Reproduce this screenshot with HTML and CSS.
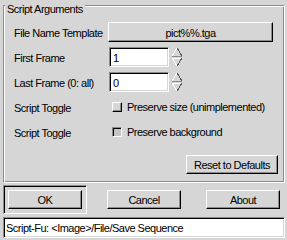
FILE: index.html
```html
<!DOCTYPE html>
<html lang="en">
<head>
  <meta charset="UTF-8">
  <title>Script-Fu: Save Sequence</title>
<link rel="stylesheet" href="styles.css">
</head>
<body>
  <div class="frame">
    <div class="frame-title">Script Arguments</div>
    <div class="args">
      <div class="row">
        <span class="label">File Name Template</span>
        <button class="btn file-btn">pict%%.tga</button>
      </div>
      <div class="row">
        <span class="label">First Frame</span>
        <input class="entry" type="text" value="1" readonly>
        <svg class="spin" width="12" height="20" viewBox="0 0 12 20">
          <path d="M1 9 L6 1" stroke="#fff"/>
          <path d="M6 1 L11 9" stroke="#555"/>
          <path d="M1 9.5 H11" stroke="#8c8c8c"/>
          <path d="M1 11.5 H11" stroke="#fff"/>
          <path d="M1 11 L6 19" stroke="#fff"/>
          <path d="M11 11 L6 19" stroke="#555"/>
        </svg>
      </div>
      <div class="row">
        <span class="label">Last Frame (0: all)</span>
        <input class="entry" type="text" value="0" readonly>
        <svg class="spin" width="12" height="20" viewBox="0 0 12 20">
          <path d="M1 9 L6 1" stroke="#fff"/>
          <path d="M6 1 L11 9" stroke="#555"/>
          <path d="M1 9.5 H11" stroke="#8c8c8c"/>
          <path d="M1 11.5 H11" stroke="#fff"/>
          <path d="M1 11 L6 19" stroke="#fff"/>
          <path d="M11 11 L6 19" stroke="#555"/>
        </svg>
      </div>
      <div class="row">
        <span class="label">Script Toggle</span>
        <label class="toggle"><input class="check" type="checkbox">Preserve size (unimplemented)</label>
      </div>
      <div class="row">
        <span class="label">Script Toggle</span>
        <label class="toggle"><input class="check" type="checkbox" checked>Preserve background</label>
      </div>
    </div>
    <div class="reset-row">
      <button class="btn reset-btn">Reset to Defaults</button>
    </div>
  </div>

  <div class="actions">
    <div class="default-box"><button class="btn">OK</button></div>
    <button class="btn cancel">Cancel</button>
    <button class="btn about">About</button>
  </div>

  <div class="status">Script-Fu: &lt;Image&gt;/File/Save Sequence</div>
</body>
</html>
```

FILE: styles.css
```css
body {
  margin: 0;
  width: 287px;
  height: 240px;
  overflow: hidden;
  background: #d6d6d6;
  color: #000;
  font: 11px "Liberation Sans", Arial, sans-serif;
  letter-spacing: -0.5px;
}

/* etched frame round the arguments */
.frame {
  margin: 5px 2px 0 3px;
  padding: 0 0 8px;
  border: 1px solid;
  border-color: #8c8c8c #fff #fff #8c8c8c;
  box-shadow: inset 1px 1px 0 #fff, inset -1px -1px 0 #8c8c8c;
}

.frame-title {
  width: fit-content;
  margin: -3px 0 0 1px;
  padding: 0 2px;
  line-height: 13px;
  background: #d6d6d6;
}

.args {
  margin-top: 6px;
  display: flex;
  flex-direction: column;
  gap: 5px;
}

.row {
  display: flex;
  align-items: center;
  height: 20px;
}

.label {
  width: 104px;
  padding: 2px 0 0 10px;
  box-sizing: border-box;
  white-space: nowrap;
}

/* raised gtk style button */
.btn {
  margin: 0;
  padding: 1px 0 0;
  height: 19px;
  box-sizing: border-box;
  font: inherit;
  letter-spacing: inherit;
  line-height: 16px;
  white-space: nowrap;
  color: #000;
  background: #d6d6d6;
  border: 1px solid;
  border-color: #fff #000 #000 #fff;
  box-shadow: inset -1px -1px 0 #8c8c8c;
}

.file-btn {
  width: 165px;
  height: 20px;
}

.entry {
  width: 60px;
  height: 20px;
  margin: 0 0 0 1px;
  padding: 1px 0 0 3px;
  box-sizing: border-box;
  font: inherit;
  letter-spacing: inherit;
  color: #000;
  background: #fff;
  outline: none;
  border: 1px solid;
  border-color: #8c8c8c #fff #fff #8c8c8c;
  box-shadow: inset 1px 1px 0 #000, inset -1px -1px 0 #d6d6d6;
}

.spin {
  margin-left: 2px;
  shape-rendering: crispEdges;
  fill: none;
}

.toggle {
  display: flex;
  align-items: center;
  gap: 5px;
  margin-left: 4px;
  white-space: nowrap;
}

.check {
  appearance: none;
  margin: 0;
  width: 10px;
  height: 10px;
  box-sizing: border-box;
  background: #d6d6d6;
  border: 1px solid;
  border-color: #fff #000 #000 #fff;
  box-shadow: inset -1px -1px 0 #8c8c8c;
}

.check:checked {
  background: #c4c4c4;
  border-color: #8c8c8c #fff #fff #8c8c8c;
  box-shadow: inset 1px 1px 0 #000;
}

.toggle span {
  padding-top: 2px;
}

.reset-row {
  display: flex;
  justify-content: flex-end;
  margin-top: 13px;
  padding-right: 6px;
}

.reset-btn {
  width: 92px;
}

/* dialog buttons */
.actions {
  display: flex;
  align-items: center;
  height: 29px;
  margin: 2px 0 0 3px;
}

.actions .btn {
  width: 74px;
}

.default-box {
  width: 84px;
  height: 29px;
  box-sizing: border-box;
  display: flex;
  align-items: center;
  justify-content: center;
  border: 1px solid;
  border-color: #8c8c8c #fff #fff #8c8c8c;
  box-shadow: inset 1px 1px 0 #000;
}

.cancel {
  margin-left: 20px;
}

.about {
  margin-left: 25px;
}

.status {
  margin: 3px 2px 0 3px;
  height: 21px;
  padding: 1px 0 0 2px;
  box-sizing: border-box;
  line-height: 18px;
  white-space: nowrap;
  background: #fff;
  border: 1px solid;
  border-color: #8c8c8c #fff #fff #8c8c8c;
  box-shadow: inset 1px 1px 0 #000, inset -1px -1px 0 #d6d6d6;
}
```
